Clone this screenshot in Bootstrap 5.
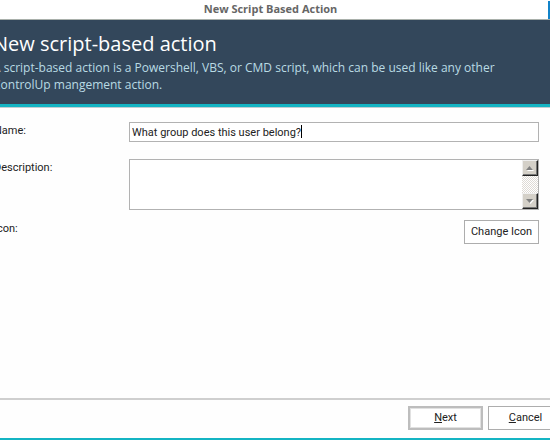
<!DOCTYPE html>
<html lang="en">
<head>
<meta charset="utf-8">
<meta name="viewport" content="width=device-width, initial-scale=1">
<title>New Script Based Action</title>
<link href="https://cdn.jsdelivr.net/npm/bootstrap@5.3.0/dist/css/bootstrap.min.css" rel="stylesheet">
<style>
  body { font-family: Roboto, "Liberation Sans", sans-serif; font-size: 11px; line-height: 14px; color: #222; background: #fefefe; }
  /* the dialog runs past both sides of the window */
  .dialog { margin-left: -7px; margin-right: -26px; border-bottom: 2px solid #14b4c3; }
  .titlebar { height: 20px; background: #fff; border-bottom: 1px solid #a9b0ab; font: bold 11px/18px "Open Sans", sans-serif; color: #666; }
  .close-box { width: 28px; margin-top: 1px; background: #1283c9; border: 0; }
  .banner { background: #33475b; color: #b9dbe4; border-bottom: 3px solid #14b4c3; padding: 12px 26px 11px 0; font: 12px/17px "Open Sans", sans-serif; box-shadow: 0 1px #c3cdd0; }
  .banner h1 { font-size: 20px; line-height: 24px; color: #fff; margin: 0 0 3px; font-weight: 400; }
  .form-area { padding: 15px 37px 0 0; }
  .label-col { width: 136px; padding: 2px 0 0 1px; }
  .field-row { margin-bottom: 17px; }
  .memo-row { margin-bottom: 10px; }
  .field, .field:focus { border: 1px solid #b2b2b2; border-radius: 0; background: #fff; color: #222; font-size: 11px; line-height: 14px; box-shadow: none; }
  input.field { height: 20px; min-height: 0; padding: 2px; }
  .caret { left: 172px; top: 3px; width: 1px; height: 13px; background: #000; }
  .memo { height: 51px; }
  .memo textarea { border: 0; resize: none; outline: 0; min-width: 0; }
  .scroller { width: 16px; background: repeating-conic-gradient(#fff 0 25%, #dedad5 0 50%) 0 0 / 2px 2px; }
  .scroller button { height: 16px; border: 1px solid; border-color: #eee #222 #222 #eee; box-shadow: inset -1px -1px #777; background: #d4d0c8; }
  .btn-flat { border: 1px solid #adadad; border-radius: 0; background: #fff; color: #222; font-size: 11px; line-height: 14px; height: 24px; padding: 0; width: 75px; }
  .btn-default { border: 2px solid #bdbdbd; box-shadow: inset 0 0 0 1px #e1e1e1; }
  .footer-bar { border-top: 2px solid #cfcfcf; padding: 6px 13px 8px 0; gap: 5px; }
</style>
</head>
<body class="overflow-hidden">
<div class="dialog d-flex flex-column min-vh-100">
  <header class="titlebar d-flex">
    <div class="flex-grow-1 text-center">New Script Based Action</div>
    <button type="button" class="close-box" aria-label="Close"></button>
  </header>
  <section class="banner">
    <h1>New script-based action</h1>
    <p class="mb-0">A script-based action is a Powershell, VBS, or CMD script, which can be used like any other<br>ControlUp mangement action.</p>
  </section>
  <form class="flex-grow-1 d-flex flex-column">
    <div class="form-area flex-grow-1">
      <div class="d-flex field-row">
        <label for="name" class="label-col">Name:</label>
        <div class="position-relative flex-grow-1">
          <input id="name" type="text" class="form-control field" value="What group does this user belong?">
          <span class="caret position-absolute"></span>
        </div>
      </div>
      <div class="d-flex memo-row">
        <label for="desc" class="label-col">Description:</label>
        <div class="field memo d-flex flex-grow-1">
          <textarea id="desc" class="flex-grow-1 p-1"></textarea>
          <div class="scroller d-flex flex-column justify-content-between">
            <button type="button" class="p-0 d-flex align-items-center justify-content-center" aria-label="Scroll up"><svg width="8" height="5" viewBox="0 0 8 5"><path d="M1 5h7L4.500 1z" fill="#fff"/><path d="M0 4h7L3.500 0z" fill="#808080"/></svg></button>
            <button type="button" class="p-0 d-flex align-items-center justify-content-center" aria-label="Scroll down"><svg width="8" height="5" viewBox="0 0 8 5"><path d="M1 1h7L4.500 5z" fill="#fff"/><path d="M0 0h7L3.500 4z" fill="#808080"/></svg></button>
          </div>
        </div>
      </div>
      <div class="d-flex">
        <label for="icon" class="label-col">Icon:</label>
        <button id="icon" type="button" class="btn btn-flat ms-auto">Change Icon</button>
      </div>
    </div>
    <footer class="footer-bar d-flex justify-content-end">
      <button type="submit" class="btn btn-flat btn-default"><u>N</u>ext</button>
      <button type="button" class="btn btn-flat"><u>C</u>ancel</button>
    </footer>
  </form>
</div>
<script src="https://cdn.jsdelivr.net/npm/bootstrap@5.3.0/dist/js/bootstrap.bundle.min.js"></script>
</body>
</html>
